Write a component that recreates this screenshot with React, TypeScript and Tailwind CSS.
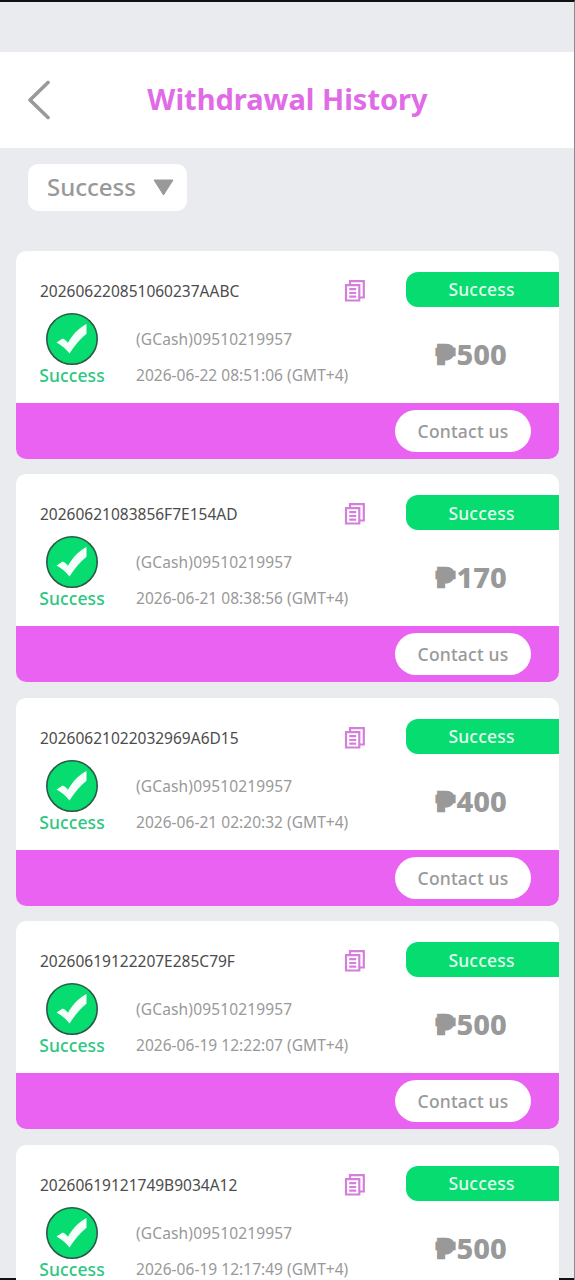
import React, { useState } from "react";

const records = [
  { id: "202606220851060237AABC", account: "(GCash)09510219957", time: "2026-06-22 08:51:06 (GMT+4)", amount: 500 },
  { id: "20260621083856F7E154AD", account: "(GCash)09510219957", time: "2026-06-21 08:38:56 (GMT+4)", amount: 170 },
  { id: "20260621022032969A6D15", account: "(GCash)09510219957", time: "2026-06-21 02:20:32 (GMT+4)", amount: 400 },
  { id: "20260619122207E285C79F", account: "(GCash)09510219957", time: "2026-06-19 12:22:07 (GMT+4)", amount: 500 },
  { id: "20260619121749B9034A12", account: "(GCash)09510219957", time: "2026-06-19 12:17:49 (GMT+4)", amount: 500 },
];

const CopyIcon = () => (
  <svg width="22" height="24" viewBox="0 0 22 24" fill="none" stroke="#d47fda" strokeWidth="2.2">
    <path d="M6 5.5V2.2h13.8v16.3H16" />
    <path d="M2 6.2h13.3v15.3H2z" />
    <path d="M5.2 10.2h7M5.2 14h7M5.2 17.7h7" />
  </svg>
);

const CheckIcon = () => (
  <svg width="52" height="52" viewBox="0 0 52 52">
    <circle cx="26" cy="26" r="25.2" fill="#06dc70" stroke="#2b5b45" strokeWidth="1.6" />
    <path d="M10.5 29.5L16.7 25.5C18.8 26.5 20.5 28 22 29.8C26 22.5 32 15.5 40.5 11V20.8C34 26 28.3 33 23.5 40.5C20 36 15.5 32 10.5 29.5z" fill="#f4fff9" />
  </svg>
);

type RecordItem = (typeof records)[number];

const RecordCard = ({ record }: { record: RecordItem }) => (
  <div className="h-[208px] rounded-[10px] bg-white shrink-0 flex flex-col">
    <div className="h-[152px] shrink-0 flex">
      <div className="w-[390px] pl-6 shrink-0">
        <div className="flex items-center justify-between h-[26px] mt-[27px] pr-[40px]">
          <span className="pt-[2px] text-[15.5px] text-[#4c4c4c]">{record.id}</span>
          <button aria-label="Copy">
            <CopyIcon />
          </button>
        </div>
        <div className="flex mt-[9px]">
          <div className="w-[64px] flex flex-col items-center">
            <CheckIcon />
            <span className="text-[17.5px] leading-[20px] font-medium text-[#2cc881] tracking-[0.1px]">Success</span>
          </div>
          <div className="ml-8 mt-[8px] text-[15.5px] leading-[36px] text-[#999999] whitespace-nowrap">
            <p className="tracking-[0.15px]">{record.account}</p>
            <p className="tracking-[0.03px]">{record.time}</p>
          </div>
        </div>
      </div>
      <div className="flex-1 mt-[21px]">
        <div className="h-[35px] pr-[2px] pt-px rounded-l-[12px] bg-[#06dc70] text-[#e2fbec] text-[17.5px] font-medium tracking-[0.2px] flex items-center justify-center">
          Success
        </div>
        <p className="mt-[27px] h-[40px] leading-[40px] pr-[20px] text-center text-[29px] font-extrabold text-[#999999]">
          <span className="inline-block mr-[3px] text-[26.5px] leading-[30px] scale-x-[1.15] -translate-y-px [-webkit-text-stroke:2.6px_#999999]">₱</span>
          {record.amount}
        </p>
      </div>
    </div>
    <div className="flex-1 rounded-b-[10px] bg-[#ea62f2] flex items-center justify-end pr-7">
      <button className="w-[136px] h-[42px] pt-px rounded-full bg-white text-[17.5px] font-medium text-[#999999] tracking-[0.2px]">
        Contact us
      </button>
    </div>
  </div>
);

const App = () => {
  const [status] = useState("Success");

  return (
    <div className="relative h-[1280px] overflow-hidden flex flex-col bg-[#eaebef] border-t-2 border-t-[#111111] border-r border-r-[#8b8a90] font-['Noto_Sans',sans-serif]">
      <div className="h-[50px] shrink-0" />

      <header className="h-24 shrink-0 bg-white flex items-center pl-7">
        <button aria-label="Back" className="w-[23px]">
          <svg width="23" height="40" viewBox="0 0 23 40" fill="none" stroke="#999999" strokeWidth="3.6" strokeLinecap="round" strokeLinejoin="round">
            <path d="M20 2.5L2 20l18 17.5" />
          </svg>
        </button>
        <h1 className="flex-1 pr-[50px] pb-[2px] text-center text-[29px] font-bold text-[#df6be6]">Withdrawal History</h1>
      </header>

      {/* Status filter */}
      <div className="h-[102.6px] shrink-0 pl-7 pt-4">
        <button className="w-[159px] h-[47px] rounded-[10px] bg-white pl-[19px] pr-[13px] flex items-center justify-between text-[24px] font-medium text-[#999999]">
          <span className="pb-px">{status}</span>
          <svg width="21" height="17" viewBox="0 0 21 17" fill="#999999">
            <path d="M1 1h19L10.5 16z" stroke="#999999" strokeLinejoin="round" />
          </svg>
        </button>
      </div>

      <div className="absolute inset-x-0 bottom-0 h-[2px] bg-[#111111]" />

      <main className="relative flex flex-col gap-[15.5px] pl-4 pr-[15px]">
        {records.map((record) => (
          <RecordCard key={record.id} record={record} />
        ))}
      </main>
    </div>
  );
};

export default App;
